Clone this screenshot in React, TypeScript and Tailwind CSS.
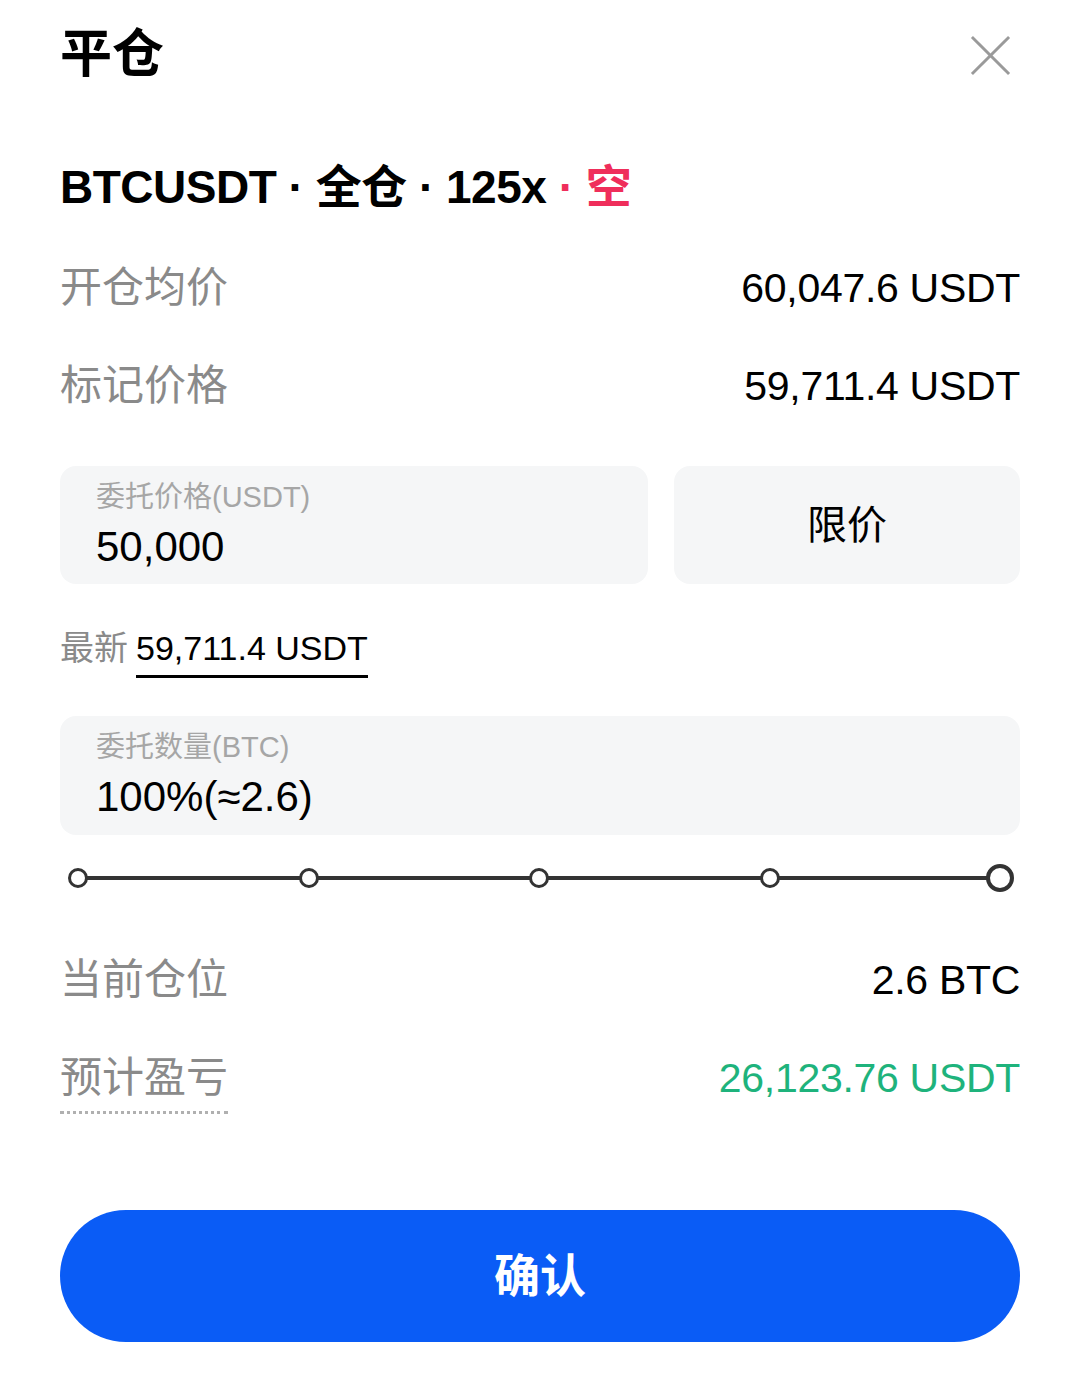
const font = { fontFamily: '"Liberation Sans", Roboto, "Noto Sans CJK SC", sans-serif' };

function Row({ label, value, valueClass, dotted }: { label: string; value: string; valueClass?: string; dotted?: boolean }) {
  return (
    <div className="flex h-[98px] items-center justify-between">
      <span
        className={
          'text-[42px] leading-none text-[#8a8a8a] ' +
          (dotted ? 'mt-[14px] border-b-[3px] border-dotted border-[#b0b0b0] pb-[12px]' : '')
        }
      >
        {label}
      </span>
      <span className={'text-[41px] leading-none tracking-[-0.3px] ' + (valueClass ?? 'text-black')}>{value}</span>
    </div>
  );
}

export default function App() {
  const stops = [0, 25, 50, 75, 100];
  return (
    <div className="min-h-[1379px] w-[1080px] bg-white px-[60px]" style={font}>
      {/* header */}
      <div className="flex h-[108px] items-center justify-between">
        <h1 className="text-[52px] font-bold leading-none text-black">平仓</h1>
        <svg className="mr-[9px] mt-[2px] h-[41px] w-[41px]" viewBox="0 0 42 42" fill="none" stroke="#9a9a9a" strokeWidth="3">
          <path d="M2 2L40 40M40 2L2 40" />
        </svg>
      </div>

      <div className="flex h-[158px] items-center">
        <h2 className="text-[46px] font-bold leading-none tracking-[-0.5px] text-black">
          BTCUSDT · 全仓 · 125x <span className="text-[#ef2e5b]">· 空</span>
        </h2>
      </div>

      <div className="-mt-[27px]">
        <Row label="开仓均价" value="60,047.6 USDT" />
        <Row label="标记价格" value="59,711.4 USDT" />
      </div>

      {/* price inputs */}
      <div className="mt-[31px] flex gap-[26px]">
        <div className="flex h-[118px] flex-1 flex-col justify-center rounded-[16px] bg-[#f5f6f7] px-[36px]">
          <span className="text-[29px] leading-none text-[#a6a6a6]">委托价格(USDT)</span>
          <span className="mt-[14px] text-[42px] leading-none text-black">50,000</span>
        </div>
        <div className="flex h-[118px] w-[346px] items-center justify-center rounded-[16px] bg-[#f5f6f7]">
          <span className="text-[40px] leading-none text-black">限价</span>
        </div>
      </div>

      <div className="mt-[47px] flex items-start">
        <span className="text-[34px] leading-none text-[#8a8a8a]">最新</span>
        <span className="ml-[8px] border-b-[3px] border-black pb-[10px] text-[34px] leading-none text-black">59,711.4 USDT</span>
      </div>

      <div className="mt-[38px] flex h-[119px] flex-col justify-center rounded-[16px] bg-[#f5f6f7] px-[36px]">
        <span className="text-[29px] leading-none text-[#a6a6a6]">委托数量(BTC)</span>
        <span className="mt-[14px] text-[42px] leading-none text-black">100%(≈2.6)</span>
      </div>

      {/* slider */}
      <div className="relative ml-[18px] mr-[20px] mt-[28px] h-[30px]">
        <div className="absolute left-0 right-0 top-[13px] h-[4px] bg-[#333]" />
        {stops.map((s) =>
          s === 100 ? (
            <div
              key={s}
              className="absolute top-[1px] h-[28px] w-[28px] -translate-x-1/2 rounded-full border-[4px] border-[#333] bg-white"
              style={{ left: `${s}%` }}
            />
          ) : (
            <div
              key={s}
              className="absolute top-[5px] h-[20px] w-[20px] -translate-x-1/2 rounded-full border-[3px] border-[#333] bg-white"
              style={{ left: `${s}%` }}
            />
          )
        )}
      </div>

      <div className="mt-[38px]">
        <Row label="当前仓位" value="2.6 BTC" />
        <Row label="预计盈亏" value="26,123.76 USDT" valueClass="text-[#1eb37c]" dotted />
      </div>

      <button className="mt-[83px] flex h-[132px] w-full items-center justify-center rounded-full bg-[#0a5cf6]">
        <span className="text-[46px] font-bold leading-none text-white">确认</span>
      </button>
    </div>
  );
}
